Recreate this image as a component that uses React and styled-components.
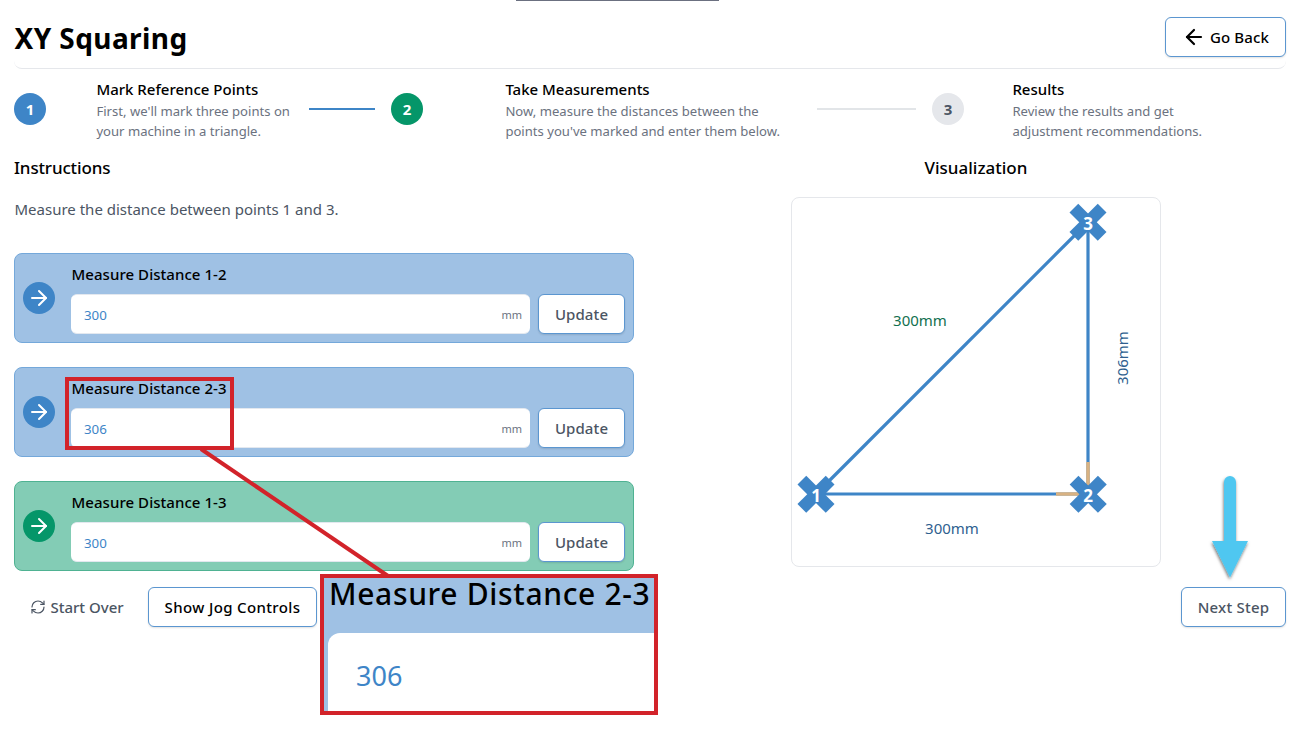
import React from "react";
import styled, { createGlobalStyle } from "styled-components";
import { ArrowLeft, ArrowRight, RefreshCw } from "lucide-react";

const blue = "#3e85c7";
const green = "#059669";
const red = "#d2232a";

const GlobalStyle = createGlobalStyle`
  *, *::before, *::after { box-sizing: border-box; }
  body {
    margin: 0;
    background: #fff;
    color: #000;
    font-family: "Noto Sans", "Open Sans", sans-serif;
    font-size: 15px;
    line-height: 24px;
    overflow: hidden;
  }
`;

const Page = styled.div`
  position: relative;
  width: 1302px;
  height: 732px;
  padding: 0 16px 0 14px;
  overflow: hidden;
`;

const TopEdge = styled.div`
  width: 203px;
  height: 1px;
  margin-left: 502px;
  background: #6b7080;
`;

const Header = styled.header`
  display: flex;
  justify-content: space-between;
  align-items: center;
  height: 68px;
  padding-top: 4px;
  border-bottom: 1px solid #e5e7eb;
  border-radius: 8px;
  margin-bottom: 10px;
`;

const Title = styled.h1`
  margin: 2px 0 0 0.5px;
  font-size: 28px;
  line-height: 36px;
  font-weight: 700;
  letter-spacing: 0.42px;
`;

const Button = styled.button`
  display: flex;
  align-items: center;
  justify-content: center;
  gap: 4px;
  flex: none;
  width: ${(p) => p.$width}px;
  height: 40px;
  padding: 0;
  border: 1px solid ${(p) => (p.$ghost ? "transparent" : "#5b96d0")};
  border-radius: 6px;
  background: ${(p) => (p.$ghost ? "transparent" : "#fff")};
  box-shadow: ${(p) => (p.$ghost ? "none" : "0 1px 2px rgba(0, 0, 0, 0.12)")};
  color: ${(p) => (p.$dark ? "#000" : "#4b5563")};
  font: 500 15px/24px "Noto Sans", "Open Sans", sans-serif;
  letter-spacing: ${(p) => p.$tracking || 0}px;
  white-space: nowrap;
`;

const Stepper = styled.ol`
  display: flex;
  align-items: center;
  height: 60px;
  margin: 0;
  padding: 0;
  list-style: none;
`;

const Step = styled.li`
  display: flex;
  align-items: center;
  flex: none;
`;

const StepNumber = styled.span`
  display: grid;
  place-items: center;
  width: 32px;
  height: 32px;
  border-radius: 50%;
  background: ${(p) => p.$bg};
  color: ${(p) => p.$color || "#fff"};
  font-size: 15px;
  font-weight: 700;
`;

const StepText = styled.div`
  width: ${(p) => p.$width}px;
  margin-left: ${(p) => p.$indent}px;
  padding-left: 0.4px;
`;

const StepTitle = styled.div`
  height: 22px;
  line-height: 21px;
  font-weight: 500;
`;

const StepCopy = styled.div`
  color: #6b7280;
  font-size: 13.1px;
  line-height: 20px;
  margin-bottom: -2px;
  white-space: pre;
`;

const Connector = styled.span`
  flex: none;
  width: ${(p) => p.$width}px;
  height: 2px;
  margin-right: 16px;
  background: ${(p) => p.$bg};
`;

const Columns = styled.main`
  display: grid;
  grid-template-columns: 620px 620px;
  gap: 32px;
  margin-top: 15px;
`;

const Column = styled.section`
  display: flex;
  flex-direction: column;
  align-items: ${(p) => (p.$centered ? "center" : "stretch")};
`;

const Heading = styled.h2`
  margin: 0;
  font-size: 17px;
  line-height: 28px;
  font-weight: 500;
  letter-spacing: ${(p) => p.$tracking || 0}px;
`;

const Lead = styled.p`
  margin: 15px 0 31px;
  padding-left: 0.5px;
  line-height: 25px;
  color: #4b5563;
`;

const CardList = styled.div`
  display: flex;
  flex-direction: column;
  gap: 24px;
`;

const Card = styled.div`
  display: flex;
  align-items: center;
  gap: 16px;
  height: 90px;
  padding: 0 8px;
  border: 1px solid ${(p) => (p.$active ? "#4fb292" : "#74a8da")};
  border-radius: 8px;
  background: ${(p) => (p.$active ? "#83ccb5" : "#9fc1e4")};
`;

const CardIcon = styled.span`
  display: grid;
  place-items: center;
  flex: none;
  width: 32px;
  height: 32px;
  border-radius: 50%;
  background: ${(p) => (p.$active ? green : blue)};
  color: #fff;
`;

const CardBody = styled.div`
  flex: 1;
`;

const CardTitle = styled.div`
  height: 32px;
  padding-left: 0.5px;
  font-weight: 500;
  letter-spacing: 0.05px;
`;

const FieldRow = styled.div`
  display: flex;
  gap: 8px;
`;

const Field = styled.div`
  display: flex;
  flex: 1;
  align-items: center;
  justify-content: space-between;
  height: 40px;
  padding: 1px 8px 0 13px;
  border: 1px solid #e3e8ef;
  border-width: 1px 0;
  border-radius: 6px;
  background: #fff;
`;

const Value = styled.span`
  color: ${blue};
  font-size: 13.3px;
`;

const Unit = styled.span`
  color: #6b7280;
  font-size: 11px;
`;

const Actions = styled.footer`
  display: flex;
  align-items: center;
  gap: 8px;
  margin-top: 4px;
  padding-top: 12px;
`;

const Spacer = styled.div`
  flex: 1;
`;

const Plot = styled.svg`
  width: 370px;
  height: 370px;
  margin-top: 15px;
  border: 1px solid #e5e7eb;
  border-radius: 8px;
  font-family: "Noto Sans", "Open Sans", sans-serif;
`;

const Overlay = styled.svg`
  position: absolute;
  inset: 0;
  pointer-events: none;
`;

const Callout = styled.div`
  position: absolute;
  left: 320px;
  top: 574px;
  width: 338px;
  height: 141px;
  padding-left: 4px;
  border: 4px solid ${red};
  background: #9fc1e4;
  overflow: hidden;
`;

const CalloutTitle = styled.div`
  height: 55px;
  padding-left: 1px;
  font-size: 30px;
  line-height: 32px;
  font-weight: 500;
  white-space: nowrap;
  letter-spacing: 0.66px;
`;

const CalloutField = styled.div`
  height: 90px;
  padding: 23px 0 0 28px;
  border-radius: 12px 0 0 12px;
  background: #fff;
  color: ${blue};
  font-size: 27px;
  line-height: 40px;
`;

const measurements = [
  { label: "Measure Distance 1-2", value: "300" },
  { label: "Measure Distance 2-3", value: "306" },
  { label: "Measure Distance 1-3", value: "300", active: true },
];

function Marker({ x, y, label }) {
  return (
    <g transform={`translate(${x} ${y})`}>
      <g fill={blue} transform="rotate(45)">
        <rect x="-20" y="-6.2" width="40" height="12.4" />
        <rect x="-6.2" y="-20" width="12.4" height="40" />
      </g>
      <text y="7.5" fill="#fff" fontSize="17" fontWeight="700" textAnchor="middle">
        {label}
      </text>
    </g>
  );
}

function Triangle() {
  return (
    <Plot viewBox="0 0 368 368">
      <g stroke={blue} strokeWidth="3.2">
        <line x1="24" y1="296" x2="296" y2="296" />
        <line x1="296" y1="296" x2="296" y2="24" />
        <line x1="24" y1="296" x2="296" y2="24" />
      </g>
      <path d="M264 296H296V264" fill="none" stroke="#d8b283" strokeWidth="3.6" />
      <Marker x={24} y={296.3} label="1" />
      <Marker x={296.2} y={296.3} label="2" />
      <Marker x={296} y={24.3} label="3" />
      <g fontSize="15" textAnchor="middle">
        <text x="128" y="128" fill="#12704f">300mm</text>
        <text x="160" y="336" fill="#2f5f8f">300mm</text>
        <text transform="translate(336 160) rotate(-90)" fill="#2f5f8f">306mm</text>
      </g>
    </Plot>
  );
}

export default function App() {
  return (
    <>
      <GlobalStyle />
      <Page>
        <TopEdge />
        <Header>
          <Title>XY Squaring</Title>
          <Button $width={121} $dark $tracking={0.1}>
            <ArrowLeft size={24} strokeWidth={2.2} />
            Go Back
          </Button>
        </Header>

        <Stepper>
          <Step>
            <StepNumber $bg={blue}>1</StepNumber>
            <StepText $indent={50} $width={213}>
              <StepTitle>Mark Reference Points</StepTitle>
              <StepCopy>{"First, we'll mark three points on\nyour machine in a triangle."}</StepCopy>
            </StepText>
            <Connector $width={66} $bg={blue} />
          </Step>
          <Step>
            <StepNumber $bg={green}>2</StepNumber>
            <StepText $indent={82} $width={312}>
              <StepTitle>Take Measurements</StepTitle>
              <StepCopy>{"Now, measure the distances between the\npoints you've marked and enter them below."}</StepCopy>
            </StepText>
            <Connector $width={99} $bg="#e2e5e8" />
          </Step>
          <Step>
            <StepNumber $bg="#e5e7eb" $color="#4b5563">3</StepNumber>
            <StepText $indent={48} $width={220}>
              <StepTitle>Results</StepTitle>
              <StepCopy>{"Review the results and get\nadjustment recommendations."}</StepCopy>
            </StepText>
          </Step>
        </Stepper>

        <Columns>
          <Column>
            <Heading $tracking={-0.15}>Instructions</Heading>
            <Lead>Measure the distance between points 1 and 3.</Lead>
            <CardList>
              {measurements.map((m) => (
                <Card key={m.label} $active={m.active}>
                  <CardIcon $active={m.active}>
                    <ArrowRight size={24} strokeWidth={2} />
                  </CardIcon>
                  <CardBody>
                    <CardTitle>{m.label}</CardTitle>
                    <FieldRow>
                      <Field>
                        <Value>{m.value}</Value>
                        <Unit>mm</Unit>
                      </Field>
                      <Button $width={87} $tracking={0.1}>Update</Button>
                    </FieldRow>
                  </CardBody>
                </Card>
              ))}
            </CardList>
          </Column>
          <Column $centered>
            <Heading>Visualization</Heading>
            <Triangle />
          </Column>
        </Columns>

        <Actions>
          <Button $width={126} $ghost>
            <RefreshCw size={16} strokeWidth={1.8} />
            Start Over
          </Button>
          <Button $width={169} $dark $tracking={0.36}>
            Show Jog Controls
          </Button>
          <Spacer />
          <Button $width={105} $tracking={0.2}>Next Step</Button>
        </Actions>

        <Overlay width="1302" height="732" viewBox="0 0 1302 732">
          <defs>
            <filter id="arrowShadow" x="-50%" y="-20%" width="200%" height="140%">
              <feDropShadow dx="-0.5" dy="2" stdDeviation="1.8" floodOpacity="0.55" />
            </filter>
          </defs>
          <rect x="67" y="379" width="165" height="69" fill="none" stroke={red} strokeWidth="4" />
          <line x1="201" y1="449" x2="388" y2="576" stroke={red} strokeWidth="4" />
          <path
            d="M1224 482a6 6 0 0 1 12 0V541H1248L1230 577.5L1212 541H1224Z"
            fill="#4fc7f0"
            filter="url(#arrowShadow)"
          />
        </Overlay>
        <Callout>
          <CalloutTitle>Measure Distance 2-3</CalloutTitle>
          <CalloutField>306</CalloutField>
        </Callout>
      </Page>
    </>
  );
}
